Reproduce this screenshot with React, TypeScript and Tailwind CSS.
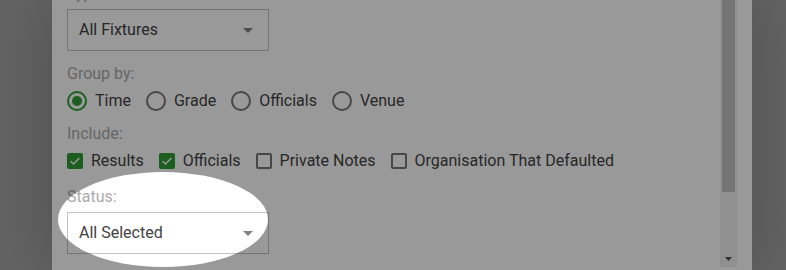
import React from "react"

const groupBy = ["Time", "Grade", "Officials", "Venue"]
const include = [
  { label: "Results", checked: true },
  { label: "Officials", checked: true },
  { label: "Private Notes", checked: false },
  { label: "Organisation That Defaulted", checked: false },
]

function Caret() {
  return (
    <svg width="10" height="5" viewBox="0 0 10 5" className="shrink-0">
      <path d="M0 0h10L5 5z" fill="#808080" />
    </svg>
  )
}

function Select({ value }: { value: string }) {
  return (
    <div className="flex h-[42px] w-[202px] items-center justify-between border border-[#c4c4c4] pl-[11px] pr-[15px] text-[16px] text-[#424242]">
      <span>{value}</span>
      <Caret />
    </div>
  )
}

function Label({ children }: { children: React.ReactNode }) {
  return <div className="h-6 text-[16px] leading-6 text-[#ababab]">{children}</div>
}

function Radio({ label, selected }: { label: string; selected: boolean }) {
  return (
    <div className="flex items-center gap-2">
      <span
        className={
          selected
            ? "flex h-5 w-5 items-center justify-center rounded-full border-2 border-[#2e9d36]"
            : "h-5 w-5 rounded-full border-2 border-[#777777]"
        }
      >
        {selected && <span className="h-[10px] w-[10px] rounded-full bg-[#2e9d36]" />}
      </span>
      <span>{label}</span>
    </div>
  )
}

function Checkbox({ label, checked }: { label: string; checked: boolean }) {
  return (
    <div className="flex items-center gap-2">
      {checked ? (
        <span className="flex h-4 w-4 items-center justify-center rounded-[2px] bg-[#2e9d36]">
          <svg width="16" height="16" viewBox="0 0 16 16">
            <path d="M3.6 8.2l2.9 2.9 5.9-6" fill="none" stroke="#ffffff" strokeWidth="1.4" />
          </svg>
        </span>
      ) : (
        <span className="h-4 w-4 rounded-[2px] border-2 border-[#777777]" />
      )}
      <span>{label}</span>
    </div>
  )
}

export default function App() {
  return (
    <div className="relative flex h-[270px] w-[786px] overflow-hidden bg-[#a5a5a5] font-['Roboto',sans-serif]">
      {/* Modal */}
      <div className="ml-[52px] flex h-full w-[700px] bg-white pr-[15px] shadow-[0_0_60px_rgba(0,0,0,0.2)]">
        <div className="flex-1 overflow-hidden pl-[15px]">
          <div className="-mt-[18px] text-[16px] text-[#424242]">
            <div className="mb-[3px]">
              <Label>Type:</Label>
            </div>
            <Select value="All Fixtures" />

            <div className="mt-[11px]">
              <Label>Group by:</Label>
            </div>
            <div className="flex h-[28px] items-center gap-[15px] pt-px">
              {groupBy.map((g, i) => (
                <Radio key={g} label={g} selected={i === 0} />
              ))}
            </div>

            <div className="mt-2">
              <Label>Include:</Label>
            </div>
            <div className="flex h-[28px] items-center gap-[15px] pt-[2px]">
              {include.map((c) => (
                <Checkbox key={c.label} label={c.label} checked={c.checked} />
              ))}
            </div>

            <div className="mb-[3px] mt-[11px]">
              <Label>Status:</Label>
            </div>
            <Select value="All Selected" />
          </div>
        </div>

        {/* Scrollbar */}
        <div className="flex h-[267px] w-[17px] flex-col bg-[#f1f1f1]">
          <div className="mx-[2px] h-[192px] bg-[#c1c1c1]" />
          <div className="flex-1" />
          <div className="flex h-[17px] items-center justify-center">
            <svg width="7" height="4" viewBox="0 0 7 4">
              <path d="M0 0h7L3.5 4z" fill="#505050" />
            </svg>
          </div>
        </div>
      </div>

      {/* Tour spotlight */}
      <div className="pointer-events-none absolute left-[58px] top-[172px] h-[95px] w-[210px] rounded-[50%] shadow-[0_0_0_2000px_rgba(0,0,0,0.4)]" />
    </div>
  )
}
